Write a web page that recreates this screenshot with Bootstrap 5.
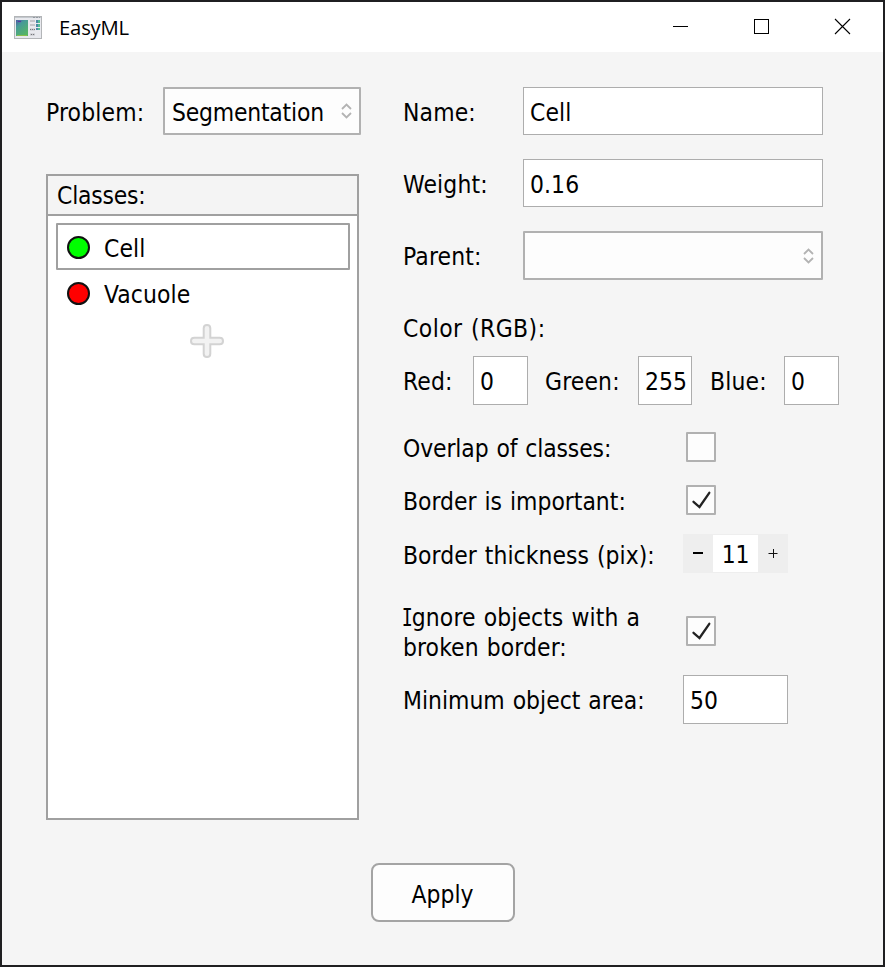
<!DOCTYPE html>
<html lang="en">
<head>
<meta charset="utf-8">
<meta name="viewport" content="width=device-width, initial-scale=1">
<title>EasyML</title>
<link href="https://cdn.jsdelivr.net/npm/bootstrap@5.3.0/dist/css/bootstrap.min.css" rel="stylesheet">
<style>
html, body { height: 100%; }
body { font-family: "DejaVu Sans Condensed", "DejaVu Sans", sans-serif; font-stretch: condensed; font-size: 24.4px; line-height: 30px; letter-spacing: -.2px; word-spacing: 1px; color: #000; background: #f5f5f5; }
.app-window { height: 967px; border: 2px solid #1f1f21; background: #f5f5f5; overflow: hidden; }
.title-bar { height: 50px; background: #fff; padding-left: 12px; }
.title-text { font-family: "Open Sans", "Noto Sans", sans-serif; font-stretch: normal; font-size: 20.3px; letter-spacing: -.2px; margin-left: 17px; }
.win-btn { width: 81px; height: 50px; }
.main-area { padding: 35px 0 0 44px; height: 811px; }
.left-col { width: 315px; margin-right: 42px; }
.right-col { width: 440px; }
.lbl { padding-top: 3px; white-space: nowrap; }
label.lbl { letter-spacing: .15px; }
.opt-name, label.opt-name { letter-spacing: 0; }
.form-control.field { height: 48px; border: 1px solid #adadad; border-radius: 0; padding: 2px 0 0 6px; font-size: inherit; line-height: 30px; color: #000; background: #fff; letter-spacing: .1px; }
.combo { height: 48px; border: 2px solid #b1b1b1; border-radius: 1px; background: #fdfdfd; padding: 3px 7px 0 7px; }
.combo svg { margin-top: -3px; }
.combo-problem { width: 198px; }
.combo-parent { height: 49px; }
.name-col { width: 120px; }
.wide { width: 300px; }
.class-panel { width: 313px; height: 646px; margin-top: 39px; border: 2px solid #a0a0a0; background: #fff; }
.class-head { height: 40px; border-bottom: 2px solid #a0a0a0; background: #f4f4f4; padding: 5px 0 0 9px; }
.class-list { padding: 7px 7px 0 8px; }
.class-item { height: 47px; border: 2px solid transparent; border-radius: 1px; padding: 1px 0 0 9px; }
.class-item .lbl { padding-top: 3px; letter-spacing: .1px; }
.class-item.current { border-color: #a0a0a0; }
.class-item + .class-item { margin-top: -1px; }
.dot { width: 23px; height: 23px; border: 2px solid #111; border-radius: 50%; margin-right: 14px; }
.dot-green { background: #0f0; }
.dot-red { background: #f00; }
.add-class { padding: 8px 0 0 8px; }
.rgb-row { height: 49px; }
.rgb-row .form-control.field, .area-field.form-control.field { height: 49px; }
.rgb-row .form-control { flex: none; }
.w-55 { width: 55px; }
.w-54 { width: 54px; }
.opt-name { width: 280px; }
.opt-row { height: 30px; }
.tick { width: 30px; height: 30px; border: 2px solid #b1b1b1; background: #fdfdfd; margin-left: 3px; border-radius: 1px; }
.spin { width: 105px; height: 39px; background: #eee; padding: 1px 0; }
.spin-val { width: 45px; height: 37px; background: #fff; padding-top: 5px; }
.spin-side { width: 30px; }
.area-field { width: 105px; }
.btn.apply { width: 144px; height: 59px; border: 2px solid #a4a4a4; border-radius: 8px; background: #fdfdfd; color: #000; font-size: inherit; line-height: 30px; padding: 5px 0 0; letter-spacing: 0; }
.color-title { margin-top: 34px; height: 42px; letter-spacing: .45px; }
.red-name { width: 70px; }
.green-name { width: 110px; padding-left: 17px; }
.blue-name { width: 92px; padding-left: 18px; }
.overlap-row { margin-top: 27px; }
.overlap-row .opt-name { letter-spacing: -.1px; }
.important-row { margin-top: 23px; }
.thick-row { margin-top: 19px; height: 39px; }
.thick-row .opt-name { letter-spacing: .05px; padding-top: 4px; }
.ignore-row { margin-top: 28px; height: 60px; }
.ignore-text { padding-top: 3px; letter-spacing: .1px; }
.area-row { margin-top: 14px; }
/* capital I with serifs */
.serif-i { display: inline-block; font-family: "DejaVu Sans Mono", monospace; font-stretch: normal; transform: scaleX(.75); margin: 0 -2.800px 0 -3.200px; }
</style>
</head>
<body>
<div class="app-window d-flex flex-column">
  <header class="title-bar d-flex align-items-center">
    <svg width="28" height="23" viewBox="0 0 28 23">
      <defs><linearGradient id="pic" x1="0" y1="0" x2=".6" y2="1"><stop offset="0" stop-color="#4c58a4"/><stop offset=".35" stop-color="#469a98"/><stop offset="1" stop-color="#55b567"/></linearGradient></defs>
      <rect x=".5" y=".5" width="27" height="22" fill="#e8e9ee" stroke="#b3b5b8"/>
      <path d="M1 1.500h26" stroke="#c3c8cd"/><path d="M19 1.500h7" stroke="#9299a0" stroke-dasharray="2 1"/>
      <rect x="2" y="4" width="12" height="16" fill="url(#pic)"/>
      <path d="M3 19.500h10" stroke="#8abf4e"/><path d="M4 5.500h3" stroke="#5b36a0"/>
      <path d="M16 5h5M16 9h5M16 13.500h5M16 18.500h5" stroke="#c4c5ca" stroke-width="2"/>
      <path d="M16 13.500h5M17 18.500h4" stroke="#75777c" stroke-dasharray="1 1"/>
      <path d="M23 4v10" stroke="#4c87a5" stroke-width="2" stroke-dasharray="3 1"/><path d="M25 4v10" stroke="#50bd94" stroke-width="2" stroke-dasharray="3 1"/>
    </svg>
    <div class="title-text">EasyML</div>
    <div class="d-flex ms-auto">
      <div class="win-btn"><svg class="d-block" width="81" height="50"><path d="M33 24.500h15" stroke="#000"/></svg></div>
      <div class="win-btn"><svg class="d-block" width="81" height="50"><rect x="33.500" y="17.500" width="14" height="14" fill="none" stroke="#000"/></svg></div>
      <div class="win-btn"><svg class="d-block" width="81" height="50"><path d="M33 17l15 15M48 17l-15 15" stroke="#000" stroke-width="1.100"/></svg></div>
    </div>
  </header>

  <main class="main-area d-flex">
    <section class="left-col">
      <div class="d-flex align-items-center justify-content-between">
        <label class="lbl">Problem:</label>
        <div class="combo combo-problem d-flex align-items-center justify-content-between">
          <span>Segmentation</span>
          <svg width="11" height="16" viewBox="0 0 11 16" fill="none" stroke="#b3b3b3" stroke-width="1.800"><path d="M1 6l4.500-4.500L10 6M1 10l4.500 4.500L10 10"/></svg>
        </div>
      </div>
      <div class="class-panel">
        <div class="class-head">Classes:</div>
        <div class="class-list">
          <div class="class-item current d-flex align-items-center"><span class="dot dot-green"></span><span class="lbl">Cell</span></div>
          <div class="class-item d-flex align-items-center"><span class="dot dot-red"></span><span class="lbl">Vacuole</span></div>
          <div class="add-class">
            <svg class="d-block mx-auto" width="34" height="34" viewBox="0 0 34 34"><path d="M17 1q3.300 0 3.300 3.300v9.400h9.400q3.300 0 3.300 3.300t-3.300 3.300h-9.400v9.400q0 3.300-3.300 3.300t-3.300-3.300v-9.400H4.300Q1 20.300 1 17t3.300-3.300h9.400V4.300Q13.700 1 17 1z" fill="#f2f2f2" stroke="#d3d3d3" stroke-width="2"/></svg>
          </div>
        </div>
      </div>
    </section>

    <section class="right-col">
      <div class="d-flex flex-column gap-4">
        <div class="d-flex align-items-center"><label class="lbl name-col">Name:</label><input class="form-control field wide" value="Cell"></div>
        <div class="d-flex align-items-center"><label class="lbl name-col">Weight:</label><input class="form-control field wide" value="0.16"></div>
        <div class="d-flex align-items-center"><label class="lbl name-col">Parent:</label>
          <div class="combo combo-parent wide d-flex align-items-center justify-content-end">
            <svg width="11" height="16" viewBox="0 0 11 16" fill="none" stroke="#b3b3b3" stroke-width="1.800"><path d="M1 6l4.500-4.500L10 6M1 10l4.500 4.500L10 10"/></svg>
          </div>
        </div>
      </div>
      <div class="color-title">Color (RGB):</div>
      <div class="rgb-row d-flex align-items-center">
        <label class="lbl red-name">Red:</label><input class="form-control field w-55" value="0">
        <label class="lbl green-name">Green:</label><input class="form-control field w-54" value="255">
        <label class="lbl blue-name">Blue:</label><input class="form-control field w-55" value="0">
      </div>
      <div class="opt-row overlap-row d-flex align-items-center"><span class="lbl opt-name">Overlap of classes:</span><span class="tick"></span></div>
      <div class="opt-row important-row d-flex align-items-center"><span class="lbl opt-name">Border is important:</span>
        <span class="tick"><svg class="d-block" width="26" height="26" viewBox="0 0 26 26" fill="none" stroke="#222" stroke-width="2.300" stroke-linecap="round"><path d="M5.500 14.800l6 5.200L21.300 5.800"/></svg></span></div>
      <div class="thick-row d-flex align-items-center"><span class="lbl opt-name">Border thickness (pix):</span>
        <div class="spin d-flex align-items-center">
          <svg class="spin-side" width="30" height="37"><path d="M10 18h10" stroke="#000" stroke-width="2"/></svg>
          <span class="spin-val text-center">11</span>
          <svg class="spin-side" width="30" height="37"><path d="M10.500 18.500h9M15.500 14v9" stroke="#111"/></svg>
        </div>
      </div>
      <div class="ignore-row d-flex align-items-center"><span class="opt-name ignore-text"><span class="serif-i">I</span>gnore objects with a<br>broken border:</span>
        <span class="tick"><svg class="d-block" width="26" height="26" viewBox="0 0 26 26" fill="none" stroke="#222" stroke-width="2.300" stroke-linecap="round"><path d="M5.500 14.800l6 5.200L21.300 5.800"/></svg></span></div>
      <div class="area-row d-flex align-items-center"><label class="lbl opt-name">Minimum object area:</label><input class="form-control field area-field" value="50"></div>
    </section>
  </main>
  <footer class="text-center"><button type="button" class="btn apply">Apply</button></footer>
</div>
<script src="https://cdn.jsdelivr.net/npm/bootstrap@5.3.0/dist/js/bootstrap.bundle.min.js"></script>
</body>
</html>
